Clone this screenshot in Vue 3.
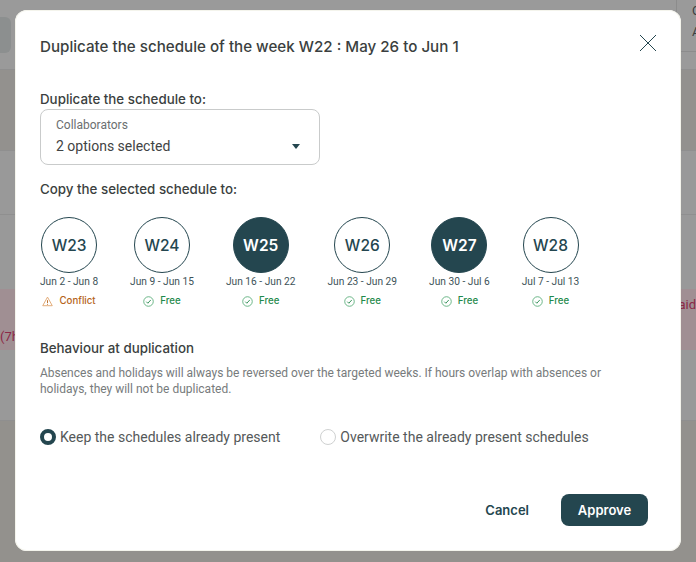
<script setup>
const weeks = [
  { id: 'W23', range: 'Jun 2 - Jun 8', conflict: true },
  { id: 'W24', range: 'Jun 9 - Jun 15' },
  { id: 'W25', range: 'Jun 16 - Jun 22', active: true },
  { id: 'W26', range: 'Jun 23 - Jun 29' },
  { id: 'W27', range: 'Jun 30 - Jul 6', active: true },
  { id: 'W28', range: 'Jul 7 - Jul 13' }
]
</script>

<template>
  <div class="page">
    <div class="backdrop">
      <div class="bg-row bg-top">
        <span class="bg-btn"></span>
        <span class="bg-head"><span>C</span><span>A</span></span>
      </div>
      <div class="bg-row bg-a"></div>
      <div class="bg-row bg-b"></div>
      <div class="bg-row bg-c"></div>
      <div class="bg-row bg-pink"><span class="pink-left">(7h</span><span class="pink-right">aid</span></div>
      <div class="bg-row bg-d"></div>
      <div class="bg-row bg-e"></div>
    </div>

    <section class="modal">
      <header class="head">
        <h1>Duplicate the schedule of the week W22 : May 26 to Jun 1</h1>
        <svg class="close" width="18" height="18" viewBox="0 0 18 18" fill="none">
          <path d="M1 1l16 16M17 1L1 17" stroke="#24464f" stroke-width="1" />
        </svg>
      </header>

      <h2 class="label first">Duplicate the schedule to:</h2>
      <div class="select">
        <div class="select-text">
          <span class="select-label">Collaborators</span>
          <span class="select-value">2 options selected</span>
        </div>
        <span class="caret"></span>
      </div>

      <h2 class="label second">Copy the selected schedule to:</h2>
      <div class="weeks">
        <div v-for="w in weeks" :key="w.id" class="week">
          <div class="circle" :class="{ active: w.active }">{{ w.id }}</div>
          <div class="range">{{ w.range }}</div>
          <div class="status" :class="{ conflict: w.conflict }">
            <svg v-if="w.conflict" width="11" height="11" viewBox="0 0 12 12" fill="none">
              <path d="M6 1.2L11.2 10.6H.8z" stroke="#e0a56f" stroke-width="1" stroke-linejoin="round" />
              <path d="M6 4.6v3M6 8.6v.9" stroke="#b5641a" stroke-width="1" />
            </svg>
            <svg v-else width="11" height="11" viewBox="0 0 12 12" fill="none">
              <circle cx="6" cy="6" r="5.2" stroke="#5fb07e" stroke-width="1" />
              <path d="M3.6 6.2l1.7 1.7 3.2-3.6" stroke="#2b8a50" stroke-width="1" />
            </svg>
            <span>{{ w.conflict ? 'Conflict' : 'Free' }}</span>
          </div>
        </div>
      </div>

      <h2 class="label third">Behaviour at duplication</h2>
      <p class="note">Absences and holidays will always be reversed over the targeted weeks. If hours overlap with absences or holidays, they will not be duplicated.</p>

      <div class="radios">
        <label class="radio">
          <span class="dot on"></span>
          <span>Keep the schedules already present</span>
        </label>
        <label class="radio">
          <span class="dot"></span>
          <span>Overwrite the already present schedules</span>
        </label>
      </div>

      <footer class="foot">
        <button class="btn ghost">Cancel</button>
        <button class="btn primary">Approve</button>
      </footer>
    </section>
  </div>
</template>

<style>
html, body { margin: 0; background: #999; }
</style>

<style scoped>
.page {
  position: relative;
  width: 696px;
  height: 562px;
  overflow: hidden;
  font-family: Roboto, sans-serif;
}
.backdrop { display: flex; flex-direction: column; height: 562px; }
.bg-row { box-sizing: border-box; border-bottom: 1px solid #8f8f8f; background: #999; }
.bg-top { height: 70px; display: flex; justify-content: space-between; align-items: flex-start; background: #9a9a9a; }
.bg-btn { width: 11px; height: 36px; margin-top: 17px; background: #8c8f8f; border-radius: 0 6px 6px 0; }
.bg-head {
  width: 20px; height: 52px; padding: 0 0 0 15px; box-sizing: border-box;
  border-left: 1px solid #8c8c8c; border-bottom: 1px solid #8c8c8c;
  display: flex; flex-direction: column; font-size: 13px; line-height: 21px; color: #3a3f40;
}
.bg-a { height: 81px; background: #93918e; }
.bg-b { height: 64px; }
.bg-c { height: 74px; border-bottom: 0; }
.bg-pink {
  height: 61px; background: #a08f93; border-bottom: 0;
  display: flex; justify-content: space-between;
  font-size: 13px; line-height: 16px; color: #8c2846;
}
.pink-left { align-self: flex-end; padding-bottom: 5px; }
.pink-right { align-self: flex-start; padding-top: 8px; }
.bg-d { height: 71px; background: #999; }
.bg-e { flex: 1; background: #93918d; border-bottom: 0; }

.modal {
  position: absolute;
  left: 15px;
  top: 10px;
  width: 666px;
  height: 541px;
  box-sizing: border-box;
  padding: 0 24px 0 25px;
  background: #fff;
  border-radius: 12px;
  box-shadow: inset 0 0 0 1px #f4f4ec;
  display: flex;
  flex-direction: column;
  color: #3f4344;
}
.head { display: flex; justify-content: space-between; align-items: flex-start; padding-top: 27px; }
h1 {
  margin: 0;
  font: 500 15.17px/20px Inter, sans-serif;
  color: #3b3f40;
}
.close { margin-top: -3px; }
.label { margin: 0; font: 500 13.34px/18px Inter, sans-serif; color: #3b3f40; }
.first { margin-top: 33px; }
.second { margin-top: 15px; }
.third { margin-top: 32px; }
.select {
  margin-top: 1px;
  width: 280px;
  height: 56px;
  box-sizing: border-box;
  border: 1px solid #c9cbcb;
  border-radius: 8px;
  padding: 8px 19px 0 15px;
  display: flex;
  justify-content: space-between;
  align-items: center;
}
.select-text { display: flex; flex-direction: column; margin-top: -8px; }
.select-label { font-size: 12px; line-height: 14px; color: #6b6f70; }
.select-value { font-size: 14px; line-height: 20px; margin-top: 4px; color: #3f4344; }
.caret {
  width: 0; height: 0; margin-top: 10px;
  border-left: 4.5px solid transparent;
  border-right: 4.5px solid transparent;
  border-top: 5px solid #24464f;
}
.weeks { display: flex; gap: 32px; margin-top: 19px; }
.week { display: flex; flex-direction: column; align-items: center; }
.circle {
  width: 56px;
  height: 56px;
  box-sizing: border-box;
  border: 1px solid #24464f;
  border-radius: 50%;
  display: flex;
  align-items: center;
  justify-content: center;
  font: 500 15.5px Inter, sans-serif;
  color: #24464f;
}
.circle.active { background: #24464f; color: #fff; font-weight: 600; }
.range { margin-top: 2px; font-size: 10.2px; line-height: 14px; color: #3d5258; white-space: nowrap; }
.status {
  margin-top: 6px;
  display: flex;
  align-items: center;
  gap: 6px;
  font: 500 9.7px/12px Inter, sans-serif;
  color: #1f8a4c;
}
.status.conflict { color: #b5641a; }
.note { margin: 8px 0 0; max-width: 570px; font-size: 12px; line-height: 16px; color: #777b7c; }
.radios { display: flex; gap: 40px; margin-top: 30px; }
.radio { display: flex; align-items: center; gap: 4px; font-size: 14px; line-height: 20px; color: #55595a; }
.dot { width: 16px; height: 16px; box-sizing: border-box; border: 1px solid #cfd1d1; border-radius: 50%; background: #fff; }
.dot.on { border: 4.5px solid #24464f; }
.foot { margin-top: auto; padding: 0 9px 25px 0; display: flex; justify-content: flex-end; align-items: center; gap: 32px; }
.btn {
  height: 32px;
  border: 0;
  border-radius: 8px;
  font: 600 13px Inter, sans-serif;
  background: none;
  color: #24464f;
  padding: 0;
}
.primary { width: 87px; background: #24464f; color: #fff; }
</style>
